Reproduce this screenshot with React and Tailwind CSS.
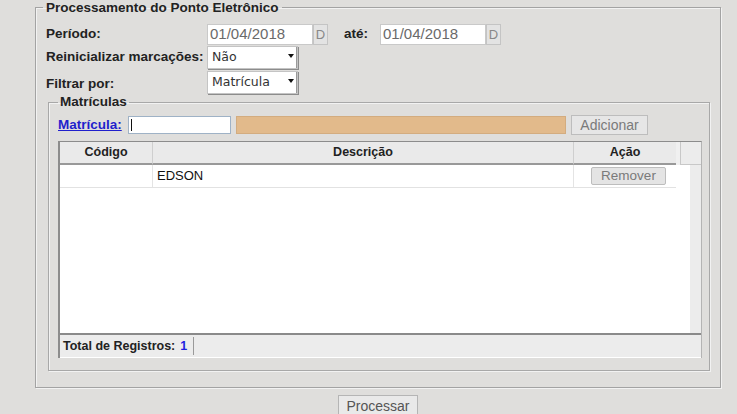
import React from "react";

function Select({ value }) {
  return (
    <div className="relative w-[91px] h-[23px] bg-white border border-[#c4c4c4] shadow-[1px_1px_0_#8c8c8c] flex items-center pl-[4px] font-['DejaVu_Sans',sans-serif] text-[12.5px] text-[#333] font-normal">
      {value}
      <svg className="absolute right-[3px] top-[7px]" width="6" height="4" viewBox="0 0 6 4">
        <path d="M0 0 L6 0 L3 4 Z" fill="#111" />
      </svg>
      <div className="absolute right-0 top-0 bottom-0 w-[1px] bg-[#9a9a9a]" />
    </div>
  );
}

function DateInput() {
  return (
    <div className="flex items-center font-normal">
      <div className="w-[106px] h-[21px] bg-white border border-[#c9c9c9] flex items-center pl-[2px] text-[15px] text-[#6a6a6a]">
        01/04/2018
      </div>
      <div className="w-[15px] h-[21px] bg-[#e3e3e3] border border-[#c4c4c4] flex items-center justify-center text-[13px] text-[#888]">
        D
      </div>
    </div>
  );
}

export default function App() {
  return (
    <div className="w-[737px] h-[414px] bg-[#dfdedc] overflow-hidden font-['Liberation_Sans',Arial,sans-serif] text-[#222]">
      <div className="pl-[35px] w-[721px]">
        <fieldset className="w-[686px] border border-[#a3a3a3] shadow-[inset_1px_1px_0_#f2f2f2,1px_1px_0_#f2f2f2] pl-[7px] pr-[10px] pb-[16px]">
          <legend className="px-[3px] text-[13.5px] font-bold leading-[15px]">Processamento do Ponto Eletrônico</legend>
          <div className="ml-[3px] pt-[9px] text-[13.5px] font-bold">
            <div className="flex items-center h-[21px]">
              <div className="w-[161px]">Período:</div>
              <DateInput />
              <div className="ml-[16px] w-[36px]">até:</div>
              <DateInput />
            </div>
            <div className="flex items-center h-[23px] mt-[1px]">
              <div className="w-[161px]">Reinicializar marcações:</div>
              <Select value="Não" />
            </div>
            <div className="flex items-center h-[25px] mt-[1px]">
              <div className="w-[161px] pt-[3px]">Filtrar por:</div>
              <Select value="Matrícula" />
            </div>

            <fieldset className="ml-[2px] border border-[#a8a8a8] shadow-[inset_1px_1px_0_#f2f2f2,1px_1px_0_#f2f2f2] pl-[9px] pr-[6px] pb-[12px]">
              <legend className="px-[2px] text-[13.5px] font-bold leading-[14px]">Matrículas</legend>
              <div className="flex items-center h-[20px] mt-[6px]">
                <a className="w-[70px] text-[#1f1fcc] underline font-bold cursor-pointer">Matrícula:</a>
                <div className="w-[103px] h-[18px] bg-white border border-[#9fb2c6] flex items-center pl-[2px]">
                  <div className="w-[1px] h-[12px] bg-[#111]" />
                </div>
                <div className="ml-[5px] w-[330px] h-[18px] bg-[#e2ba8b] border border-[#d3ac7f]" />
                <div className="ml-[5px] w-[77px] h-[20px] bg-[#e6e6e6] border border-[#bdbdbd] flex items-center justify-center text-[14px] font-normal text-[#7a7a7a]">
                  Adicionar
                </div>
              </div>

              <div className="mt-[6px] w-[644px] border-l-2 border-t border-r border-l-[#8c8c8c] border-t-[#8c8c8c] border-r-[#b4b4b4] bg-white">
                <div className="flex h-[23px] bg-[#eaeaea]">
                  <div className="w-[93px] border-b-2 border-b-[#999] border-r border-r-[#cfcfcf] flex items-center justify-center text-[12.5px]">Código</div>
                  <div className="w-[421px] border-b-2 border-b-[#999] border-r border-r-[#cfcfcf] flex items-center justify-center text-[12.5px]">Descrição</div>
                  <div className="w-[102px] border-b-2 border-b-[#999] flex items-center justify-center text-[12.5px]">Ação</div>
                  <div className="w-[4px] bg-[#f0f0f0]" />
                  <div className="w-[21px] bg-[#ececec] border-l border-b border-[#c8c8c8]" />
                </div>
                <div className="flex h-[168px]">
                  <div className="w-[630px] bg-white">
                    <div className="flex h-[23px] w-[616px] border-b border-b-[#e2e2e2] font-normal">
                      <div className="w-[93px] border-r border-r-[#e4e4e4]" />
                      <div className="w-[421px] border-r border-r-[#e4e4e4] flex items-center pl-[4px] text-[13px] text-[#111]">EDSON</div>
                      <div className="w-[102px] flex items-center pl-[17px]">
                        <div className="w-[75px] h-[18px] bg-[#e4e4e4] border border-[#bdbdbd] rounded-[2px] flex items-center justify-center text-[13.5px] text-[#7a7a7a]">
                          Remover
                        </div>
                      </div>
                    </div>
                  </div>
                  <div className="w-[11px] bg-[#ececec]" />
                </div>
                <div className="h-[2px] bg-[#8a8a8a]" />
                <div className="h-[23px] bg-[#ececec] border-b border-b-white flex items-center pl-[3px] text-[12.5px]">
                  <span>Total de Registros:</span>
                  <span className="ml-[5px] pr-[6px] text-[#1f1fe0] border-r border-r-[#9a9a9a]">1</span>
                </div>
              </div>
            </fieldset>
          </div>
        </fieldset>
        <div className="w-[686px] flex justify-center mt-[7px]">
          <div className="w-[80px] h-[22px] bg-[#e9e9e9] border border-[#b5b5b5] flex items-center justify-center text-[14px] text-[#555]">
            Processar
          </div>
        </div>
      </div>
    </div>
  );
}
